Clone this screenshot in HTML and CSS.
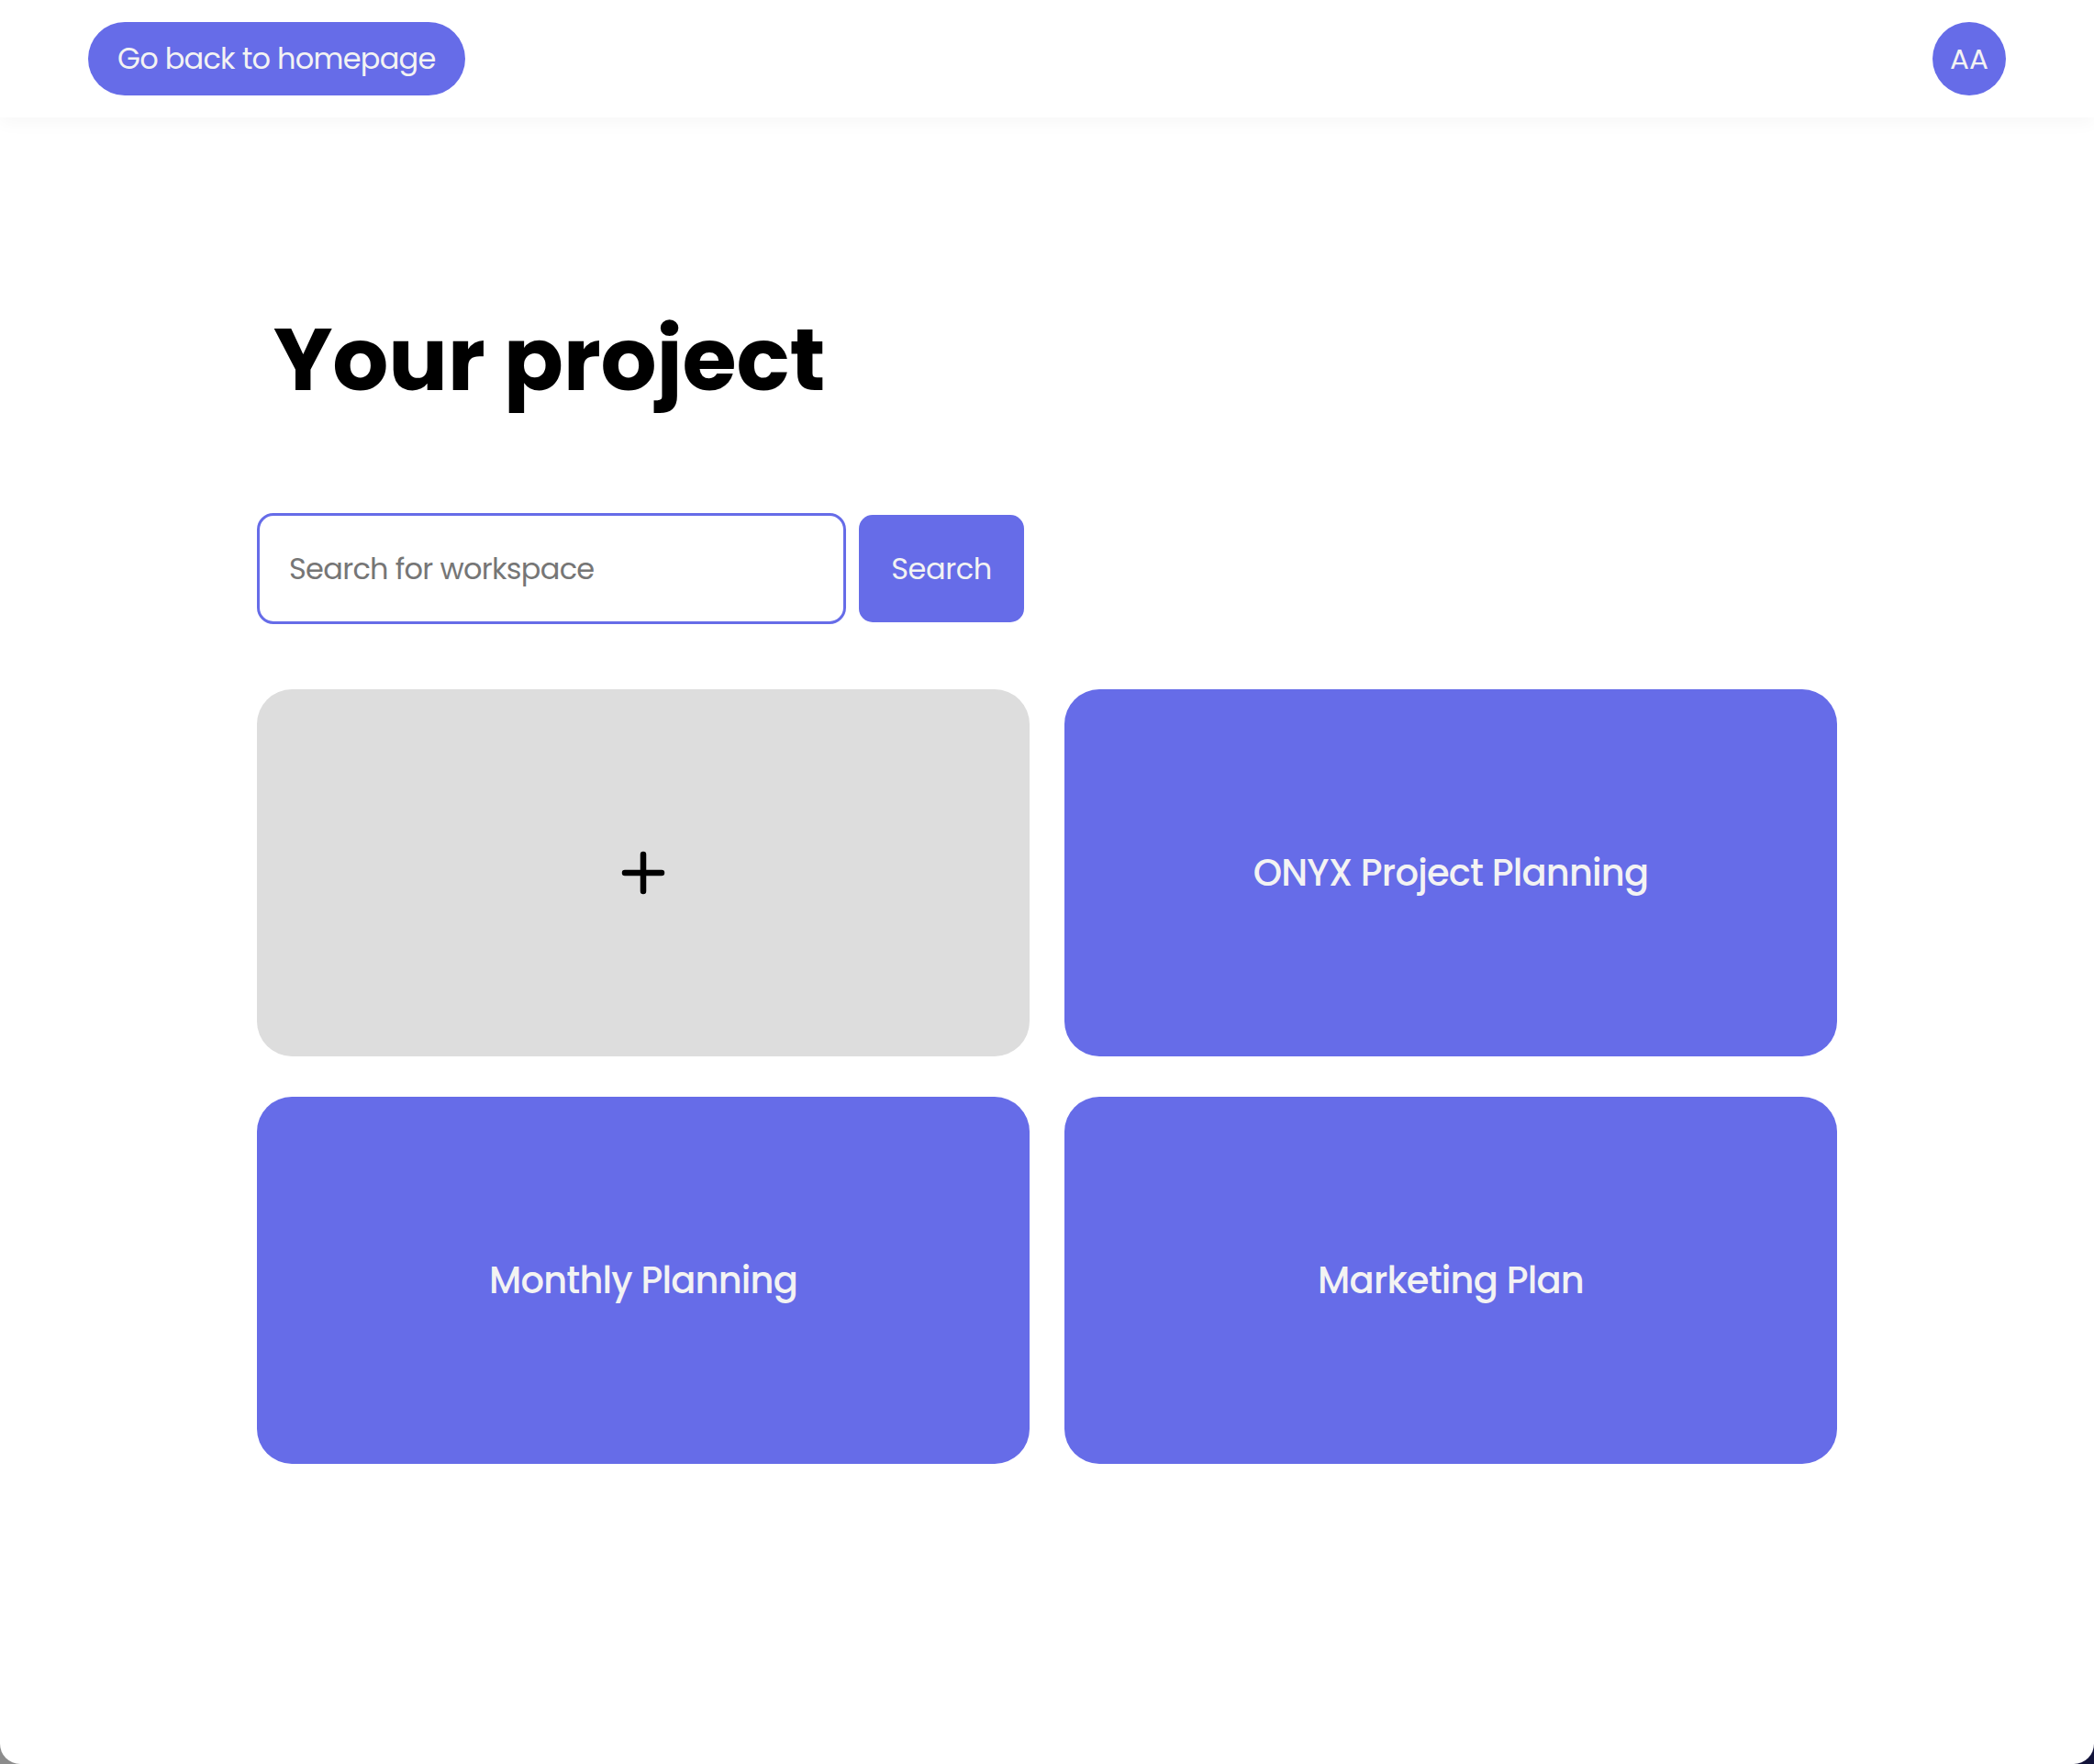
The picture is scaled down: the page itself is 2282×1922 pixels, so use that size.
FILE: index.html
```html
<!DOCTYPE html>
<html lang="en">
<head>
<meta charset="utf-8">
<title>Your project</title>
<link rel="stylesheet" href="styles.css">
</head>
<body>
<div class="window">
  <header class="topbar">
    <a class="back-btn" href="#">Go back to homepage</a>
    <div class="avatar">AA</div>
  </header>
  <main class="content">
    <h1 class="title">Your project</h1>
    <form class="search">
      <input class="search-input" type="text" placeholder="Search for workspace">
      <button class="search-btn" type="button">Search</button>
    </form>
    <div class="grid">
      <button class="card card-add" type="button" aria-label="Add project">
        <svg class="plus" width="48" height="48" viewBox="0 0 48 48" aria-hidden="true">
          <path d="M24 4v40M4 24h40" fill="none" stroke="#000" stroke-width="6.5" stroke-linecap="round"/>
        </svg>
      </button>
      <div class="card">ONYX Project Planning</div>
      <div class="card">Monthly Planning</div>
      <div class="card">Marketing Plan</div>
    </div>
  </main>
</div>
</body>
</html>
```
FILE: styles.css
```css
* { box-sizing: border-box; }

html {
  background: linear-gradient(to right, #8c8c8c 0%, #8c8c8c 50%, #12133a 50%, #12133a 100%);
}

body {
  margin: 0;
  font-family: "Poppins", "Inter", "Open Sans", sans-serif;
  color: #000;
}

.window {
  background: #fff;
  min-height: 1922px;
  border-radius: 0 0 22px 22px;
  overflow: hidden;
}

.topbar {
  height: 128px;
  padding: 0 96px;
  display: flex;
  align-items: center;
  justify-content: space-between;
  background: #fff;
  box-shadow: 0 6px 18px rgba(0, 0, 0, 0.035);
  position: relative;
}

.back-btn {
  display: inline-flex;
  align-items: center;
  height: 80px;
  padding: 0 32px;
  border-radius: 40px;
  background: #666ce8;
  color: #f3f3f3;
  text-decoration: none;
  font-size: 32px;
  font-weight: 400;
  letter-spacing: -0.75px;
}

.avatar {
  width: 80px;
  height: 80px;
  border-radius: 50%;
  background: #666ce8;
  color: #f3f3f3;
  display: flex;
  align-items: center;
  justify-content: center;
  font-size: 31px;
}

.content {
  width: 1722px;
  margin: 0 auto;
  padding-top: 216px;
}

.title {
  margin: 0;
  padding-left: 18px;
  font-size: 96px;
  line-height: 96px;
  font-weight: 700;
  letter-spacing: -0.2px;
}

.search {
  display: flex;
  align-items: center;
  margin-top: 119px;
}

.search-input {
  width: 642px;
  height: 121px;
  border: 3px solid #666ce8;
  border-radius: 18px;
  padding: 0 32px;
  font-family: inherit;
  font-size: 32px;
  letter-spacing: -0.7px;
  color: #333;
  outline: none;
}

.search-input::placeholder {
  color: #767676;
}

.search-btn {
  width: 180px;
  height: 117px;
  margin-left: 14px;
  border: 0;
  border-radius: 15px;
  background: #666ce8;
  color: #f3f3f3;
  font-family: inherit;
  font-size: 32px;
  letter-spacing: -0.4px;
  cursor: pointer;
}

.grid {
  margin-top: 71px;
  display: grid;
  grid-template-columns: 1fr 1fr;
  column-gap: 38px;
  row-gap: 44px;
}

.card {
  height: 400px;
  border-radius: 38px;
  background: #666ce8;
  color: #f3f3f3;
  display: flex;
  align-items: center;
  justify-content: center;
  font-size: 40px;
  font-weight: 500;
  letter-spacing: -0.8px;
  border: 0;
  font-family: inherit;
}

.card-add {
  background: #dddddd;
  cursor: pointer;
  padding: 0;
}

.plus {
  display: block;
  width: 48px;
  height: 48px;
}
```
